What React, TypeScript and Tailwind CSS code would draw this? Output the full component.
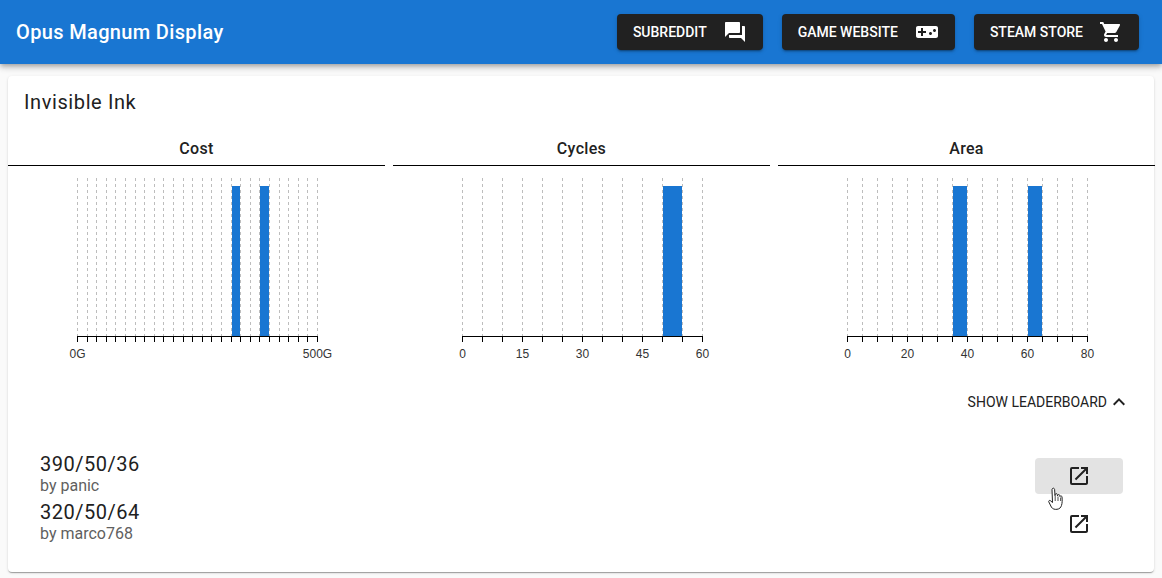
import type { ReactNode } from 'react';
import { MdExpandLess, MdOpenInNew, MdQuestionAnswer, MdShoppingCart, MdVideogameAsset } from 'react-icons/md';

type ChartProps = {
  title: string;
  /** number of histogram bins */
  bins: number;
  /** bin indexes which hold a solution */
  filled: number[];
  /** one entry per tick, empty string for an unlabelled tick */
  labels: Record<number, string>;
};

const PLOT_LEFT = 69;
const PLOT_WIDTH = 240;

function Chart({ title, bins, filled, labels }: ChartProps) {
  const step = PLOT_WIDTH / bins;
  const ticks = Array.from({ length: bins + 1 }, (_, i) => i);

  return (
    <div className="flex flex-col">
      <div className="h-[35px] border-b border-black text-center text-base leading-[36px] font-medium tracking-[0.02em] text-[#212121]">
        {title}
      </div>
      <svg width="377" height="204" className="block">
        {ticks.map((i) => {
          const x = Math.round(PLOT_LEFT + i * step) + 0.5;
          return (
            <g key={i}>
              <line x1={x} x2={x} y1="12" y2="170" stroke="#bdbdbd" strokeDasharray="3 3" />
              <line x1={x} x2={x} y1="170" y2="176" stroke="#000" />
            </g>
          );
        })}
        {filled.map((bin) => {
          // snap to whole pixels so the grid line doesn't bleed through the edge
          const left = Math.round(PLOT_LEFT + bin * step + 1);
          const right = Math.round(PLOT_LEFT + (bin + 1) * step);
          return <rect key={bin} x={left} y="20" width={right - left} height="150" fill="#1976d2" />;
        })}
        <line x1={PLOT_LEFT} x2={PLOT_LEFT + PLOT_WIDTH + 1} y1="170.5" y2="170.5" stroke="#000" />
        {ticks
          .filter((i) => labels[i])
          .map((i) => (
            <text
              key={i}
              x={PLOT_LEFT + i * step + 0.5}
              y="192"
              textAnchor="middle"
              fontSize="12"
              fill="#333"
              fontFamily="'Liberation Sans', sans-serif"
            >
              {labels[i]}
            </text>
          ))}
      </svg>
    </div>
  );
}

function NavButton({ label, icon, iconGap }: { label: string; icon: ReactNode; iconGap: string }) {
  return (
    <button className="flex h-9 items-center rounded bg-[#212121] px-4 text-sm font-medium text-white uppercase shadow-[0_3px_1px_-2px_rgba(0,0,0,0.2),0_2px_2px_0_rgba(0,0,0,0.14),0_1px_5px_0_rgba(0,0,0,0.12)]">
      <span>{label}</span>
      <span className={iconGap}>{icon}</span>
    </button>
  );
}

function SolutionRow({ score, author, hovered }: { score: string; author: string; hovered?: boolean }) {
  return (
    <div className="flex h-12 items-center justify-between">
      <div className="flex flex-col pb-1">
        <span className="text-xl leading-[24px] tracking-[0.025em] text-[#212121]">{score}</span>
        <span className="text-base leading-[20px] text-[#5f5f5f]">{author}</span>
      </div>
      <div className={`flex h-9 w-[88px] items-center justify-center rounded ${hovered ? 'bg-[#e3e3e3]' : ''}`}>
        <MdOpenInNew size={24} className="text-[#212121]" />
      </div>
    </div>
  );
}

export default function App() {
  return (
    <div className="flex h-[578px] w-[1162px] flex-col overflow-hidden bg-[#fafafa] font-['Roboto',sans-serif]">
      <header className="relative z-10 flex h-16 shrink-0 items-center justify-between bg-[#1976d2] pr-[23px] pl-4 shadow-[0_2px_4px_-1px_rgba(0,0,0,0.2),0_4px_5px_0_rgba(0,0,0,0.14),0_1px_10px_0_rgba(0,0,0,0.12)]">
        <h1 className="text-xl font-medium tracking-[0.35px] text-white">Opus Magnum Display</h1>
        <nav className="flex gap-[19px]">
          <NavButton label="Subreddit" iconGap="ml-4" icon={<MdQuestionAnswer size={24} />} />
          <NavButton label="Game Website" iconGap="ml-[17px]" icon={<MdVideogameAsset size={24} />} />
          <NavButton label="Steam Store" iconGap="ml-4" icon={<MdShoppingCart size={24} />} />
        </nav>
      </header>

      <main className="relative mx-2 mt-3 flex h-[496px] flex-col rounded bg-white shadow-[0_2px_1px_-1px_rgba(0,0,0,0.2),0_1px_1px_0_rgba(0,0,0,0.14),0_1px_3px_0_rgba(0,0,0,0.12)]">
        <h2 className="h-[55px] px-4 pt-[13px] text-xl leading-[26px] tracking-[0.03em] text-[#212121]">
          Invisible Ink
        </h2>
        <div className="grid grid-cols-[377px_377px_377px] gap-2">
          <Chart title="Cost" bins={25} filled={[16, 19]} labels={{ 0: '0G', 25: '500G' }} />
          <Chart
            title="Cycles"
            bins={12}
            filled={[10]}
            labels={{ 0: '0', 3: '15', 6: '30', 9: '45', 12: '60' }}
          />
          <Chart
            title="Area"
            bins={16}
            filled={[7, 12]}
            labels={{ 0: '0', 4: '20', 8: '40', 12: '60', 16: '80' }}
          />
        </div>

        <div className="mt-[14px] flex h-9 items-center justify-end pr-[23px] text-sm text-[#212121] uppercase">
          <span>Show Leaderboard</span>
          <MdExpandLess size={24} />
        </div>

        <div className="mt-8 flex flex-col pr-[31px] pl-8">
          <SolutionRow score="390/50/36" author="by panic" hovered />
          <SolutionRow score="320/50/64" author="by marco768" />
        </div>

        {/* mouse pointer caught in the screenshot */}
        <svg width="16" height="25" viewBox="0 0 16 25" className="absolute top-[411px] left-[1040px]">
          <path
            d="M4.5 1.5c.9-.7 2-.2 2.1 1l.4 6.2.3-1.4c.3-1 1.8-.9 2 .2l.2 1.4.3-.8c.4-.9 1.7-.7 1.9.3l.2 1.1.4-.4c.6-.5 1.6-.1 1.7.8.3 3 .3 6.2-.5 8.5-.7 2.2-1.9 3.6-4.5 3.9-2.4.3-4.4-.3-5.6-2.2L.8 14.9c-.5-.9.6-1.9 1.5-1.3l2.2 1.9L4 2.8c0-.5.1-1 .5-1.3z"
            fill="#fff"
            stroke="#222"
            strokeWidth="1"
          />
          <path d="M7.2 9v5M10 9.5V14M12.6 10.5V14" stroke="#222" strokeWidth="0.8" fill="none" />
        </svg>
      </main>
    </div>
  );
}
